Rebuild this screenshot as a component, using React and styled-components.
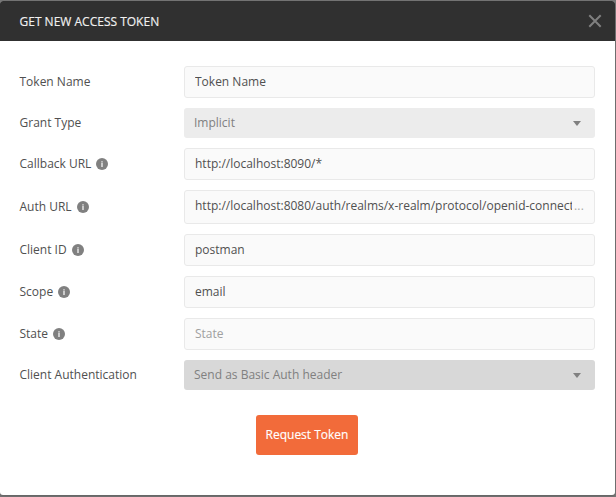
import React from "react";
import styled, { createGlobalStyle } from "styled-components";

const GlobalStyle = createGlobalStyle`
  * { box-sizing: border-box; }
  body {
    margin: 0;
    background: #777777;
    font-family: "Open Sans", "Noto Sans", sans-serif;
    font-size: 12px;
    line-height: 18px;
    color: #505050;
    overflow: hidden;
  }
  input, button { font: inherit; letter-spacing: inherit; }
`;

const Backdrop = styled.div`
  width: 616px;
  height: 497px;
  padding: 1px 1px 2px 0;
  background: #777777;
`;

const Modal = styled.section`
  height: 494px;
  display: flex;
  flex-direction: column;
  background: #ffffff;
  border-radius: 3px;
  overflow: hidden;
  box-shadow: 0 1px 3px rgba(0, 0, 0, 0.2);
`;

const Header = styled.header`
  height: 40px;
  flex: none;
  display: flex;
  align-items: center;
  justify-content: space-between;
  padding: 0 13px 0 19.5px;
  background: #303030;
`;

const Title = styled.h1`
  margin: 0;
  padding-top: 2px;
  font-size: 12px;
  font-weight: 400;
  line-height: 18px;
  color: #f0f0f0;
  -webkit-text-stroke: 0.15px #f0f0f0;
`;

const CloseButton = styled.button`
  display: flex;
  padding: 0;
  border: 0;
  background: none;
  color: #808080;
`;

const Form = styled.form`
  display: flex;
  flex-direction: column;
  gap: 10px;
  padding: 25px 20px 0 19.5px;
`;

const Row = styled.div`
  display: grid;
  grid-template-columns: 164.5px 411px;
  align-items: center;
`;

const Label = styled.label`
  display: flex;
  align-items: center;
  gap: 5px;
`;

const InputBox = styled.div`
  display: flex;
  height: ${(p) => (p.$tall ? 34 : 32)}px;
  padding: ${(p) => (p.$tall ? "0 10px 2px" : "0 10px")};
  align-items: center;
  background: #fafafa;
  border: 1px solid #e9e9e9;
  border-radius: 3px;
`;

const Input = styled.input`
  flex: 1;
  min-width: 0;
  height: 18px;
  padding: 0;
  border: 0;
  outline: 0;
  background: none;
  color: #505050;
  &::placeholder { color: #a0a0a0; opacity: 1; }
`;

const Overflow = styled.span`
  width: 12px;
  flex: none;
  text-align: right;
  letter-spacing: 0.2px;
  color: #a9a9a9;
`;

const Select = styled.div`
  display: flex;
  height: 30px;
  align-items: center;
  justify-content: space-between;
  padding: 0 14px 0 10px;
  background: ${(p) => (p.$active ? "#d8d8d8" : "#ececec")};
  border-radius: 3px;
  color: #808080;
`;

const SubmitButton = styled.button`
  align-self: center;
  width: 102px;
  height: 40px;
  margin: 15px 0 0 -0.5px;
  padding: 0;
  border: 0;
  border-radius: 3px;
  background: #f26b3a;
  color: #ffffff;
  -webkit-text-stroke: 0.15px #ffffff;
`;

const CloseIcon = () => (
  <svg width="14" height="14" viewBox="0 0 14 14">
    <path d="M1.3 1.3 12.7 12.7M12.7 1.3 1.3 12.7" stroke="currentColor" strokeWidth="2" fill="none" />
  </svg>
);

const InfoIcon = () => (
  <svg width="12" height="12" viewBox="0 0 12 12">
    <circle cx="6" cy="6" r="6" fill="#808080" />
    <path d="M5.4 3.2h1.2v1.2H5.4zM5.4 5h1.2v4H5.4z" fill="#ffffff" />
  </svg>
);

const CaretIcon = () => (
  <svg width="8" height="5" viewBox="0 0 8 5">
    <path d="M0 0h8L4 5z" fill="#808080" />
  </svg>
);

const fields = [
  { label: "Token Name", value: "Token Name" },
  { label: "Grant Type", option: "Implicit" },
  { label: "Callback URL", value: "http://localhost:8090/*", info: true },
  {
    label: "Auth URL",
    value: "http://localhost:8080/auth/realms/x-realm/protocol/openid-connect/auth",
    info: true,
    overflow: true,
  },
  { label: "Client ID", value: "postman", info: true },
  { label: "Scope", value: "email", info: true },
  { label: "State", value: "", placeholder: "State", info: true },
  { label: "Client Authentication", option: "Send as Basic Auth header", active: true },
];

const Field = ({ label, value, option, info, overflow, placeholder, active }) => (
  <Row>
    <Label>
      {label}
      {info && <InfoIcon />}
    </Label>
    {option ? (
      <Select $active={active}>
        {option}
        <CaretIcon />
      </Select>
    ) : (
      <InputBox $tall={overflow}>
        <Input defaultValue={value} placeholder={placeholder} aria-label={label} spellCheck={false} />
        {overflow && <Overflow>...</Overflow>}
      </InputBox>
    )}
  </Row>
);

export default function App() {
  return (
    <Backdrop>
      <GlobalStyle />
      <Modal>
        <Header>
          <Title>GET NEW ACCESS TOKEN</Title>
          <CloseButton aria-label="Close"><CloseIcon /></CloseButton>
        </Header>
        <Form>
          {fields.map((f) => <Field key={f.label} {...f} />)}
          <SubmitButton type="button">Request Token</SubmitButton>
        </Form>
      </Modal>
    </Backdrop>
  );
}
